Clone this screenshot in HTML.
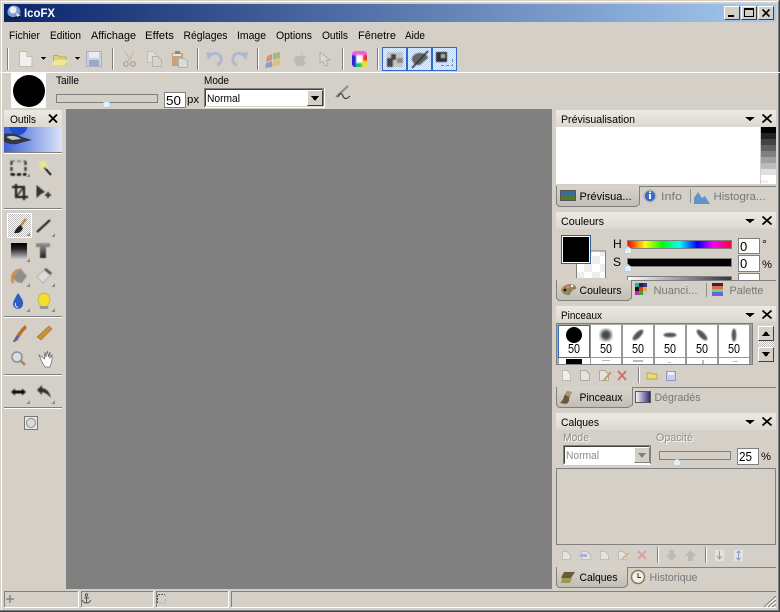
<!DOCTYPE html>
<html><head><meta charset="utf-8"><title>IcoFX</title>
<style>
html,body{margin:0;padding:0;background:#d4d0c8;width:780px;height:612px;overflow:hidden}
svg{display:block}
text{font-family:"Liberation Sans",sans-serif;font-size:11px;fill:#000}
.g{fill:#777}
.d{fill:#8c8c8c}
.ds{fill:#fff}
.e{font-size:13px}
</style></head><body>
<svg xmlns="http://www.w3.org/2000/svg" width="780" height="612" viewBox="0 0 780 612" shape-rendering="crispEdges">
<defs>
<linearGradient id="tb"><stop offset="0" stop-color="#0a246a"/><stop offset="1" stop-color="#a6caf0"/></linearGradient>
<linearGradient id="ph" x2="0" y2="1"><stop offset="0" stop-color="#ece9e3"/><stop offset="1" stop-color="#dcd8d1"/></linearGradient>
<linearGradient id="tab" x2="0" y2="1"><stop offset="0" stop-color="#d8d4cc"/><stop offset="1" stop-color="#c2beb5"/></linearGradient>
<linearGradient id="hue"><stop offset="0" stop-color="#f00"/><stop offset=".17" stop-color="#ff0"/><stop offset=".33" stop-color="#0f0"/><stop offset=".5" stop-color="#0ff"/><stop offset=".67" stop-color="#00f"/><stop offset=".83" stop-color="#f0f"/><stop offset="1" stop-color="#f03"/></linearGradient>
<linearGradient id="ban"><stop offset="0" stop-color="#3d62d8"/><stop offset="1" stop-color="#dbe3f6"/></linearGradient>
<linearGradient id="grad" x2="0" y2="1"><stop offset="0" stop-color="#000"/><stop offset=".35" stop-color="#222"/><stop offset="1" stop-color="#ccc"/></linearGradient>
<linearGradient id="tg" x2="0" y2="1"><stop offset="0" stop-color="#999"/><stop offset="1" stop-color="#222"/></linearGradient>
<linearGradient id="gh"><stop offset="0" stop-color="#fff"/><stop offset="1" stop-color="#334"/></linearGradient>
<linearGradient id="dg"><stop offset="0" stop-color="#fff"/><stop offset="1" stop-color="#2a2470"/></linearGradient>
<pattern id="chk" width="2" height="2" patternUnits="userSpaceOnUse"><rect width="2" height="2" fill="#eef3fb"/><rect width="1" height="1" fill="#bcd0f0"/><rect x="1" y="1" width="1" height="1" fill="#bcd0f0"/></pattern>
<pattern id="chk2" width="2" height="2" patternUnits="userSpaceOnUse"><rect width="2" height="2" fill="#fff"/><rect width="1" height="1" fill="#bbb"/><rect x="1" y="1" width="1" height="1" fill="#bbb"/></pattern>
<pattern id="cb" width="16" height="16" patternUnits="userSpaceOnUse"><rect width="16" height="16" fill="#fff"/><rect width="8" height="8" fill="#ededed"/><rect x="8" y="8" width="8" height="8" fill="#ededed"/></pattern>
<path id="cor" d="M0 4L4 0V4Z" fill="#8a8a8a"/>
<path id="thumb" d="M.5 3.500L4 .5L7.500 3.500V7.500H.5Z" fill="#e4f1f8" stroke="#b5cfe0" stroke-width="1"/>
<filter id="b1"><feGaussianBlur stdDeviation=".8"/></filter>
<filter id="b0"><feGaussianBlur stdDeviation=".5"/></filter>
<filter id="b2"><feGaussianBlur stdDeviation="1.600"/></filter>
<clipPath id="colc"><rect x="352" y="51" width="15" height="16" rx="3"/></clipPath>
</defs>

<!-- window frame -->
<rect width="780" height="612" fill="#d4d0c8"/>
<rect x="1" y="1" width="777" height="1" fill="#fff"/>
<rect x="1" y="1" width="1" height="609" fill="#fff"/>
<rect x="778" y="1" width="1" height="610" fill="#808080"/>
<rect x="779" y="0" width="1" height="612" fill="#404040"/>
<rect x="0" y="610" width="779" height="1" fill="#808080"/>
<rect x="0" y="611" width="780" height="1" fill="#404040"/>

<!-- title bar -->
<rect x="4" y="4" width="772" height="18" fill="url(#tb)"/>
<g shape-rendering="auto">
<circle cx="14" cy="12" r="6.500" fill="#7f9fd4"/><circle cx="13" cy="10" r="3.500" fill="#e9eef8"/><path d="M8 15Q14 20 20 13L21 17Q14 21 8 18Z" fill="#141e3e"/><path d="M16 13L21 15L17 17Z" fill="#dfe6f3"/>
<text x="24" y="17" font-weight="bold" style="font-size:12px;fill:#fff" textLength="31" lengthAdjust="spacingAndGlyphs">IcoFX</text>
</g>
<!-- window buttons -->
<g>
<rect x="724" y="6" width="16" height="14" fill="#d4d0c8"/><path d="M724.500 19.500V6.500H739.500" fill="none" stroke="#fff"/><path d="M724.500 19.500H739.500V6.500" fill="none" stroke="#404040"/><rect x="728" y="15" width="6" height="2" fill="#000"/>
<rect x="741" y="6" width="16" height="14" fill="#d4d0c8"/><path d="M741.500 19.500V6.500H756.500" fill="none" stroke="#fff"/><path d="M741.500 19.500H756.500V6.500" fill="none" stroke="#404040"/><rect x="744.500" y="8.500" width="9" height="8" fill="none" stroke="#000"/><rect x="744" y="8" width="10" height="2" fill="#000"/>
<rect x="758" y="6" width="16" height="14" fill="#d4d0c8"/><path d="M758.500 19.500V6.500H773.500" fill="none" stroke="#fff"/><path d="M758.500 19.500H773.500V6.500" fill="none" stroke="#404040"/>
<path d="M762.500 9.500L769.500 16.500M769.500 9.500L762.500 16.500" stroke="#000" stroke-width="1.600" shape-rendering="auto"/>
</g>

<!-- menu -->
<g shape-rendering="auto">
<text x="9" y="39" textLength="31" lengthAdjust="spacingAndGlyphs">Fichier</text>
<text x="50" y="39" textLength="31" lengthAdjust="spacingAndGlyphs">Edition</text>
<text x="91" y="39" textLength="45" lengthAdjust="spacingAndGlyphs">Affichage</text>
<text x="145" y="39" textLength="29" lengthAdjust="spacingAndGlyphs">Effets</text>
<text x="183.500" y="39" textLength="44" lengthAdjust="spacingAndGlyphs">Réglages</text>
<text x="237" y="39" textLength="29" lengthAdjust="spacingAndGlyphs">Image</text>
<text x="276" y="39" textLength="36" lengthAdjust="spacingAndGlyphs">Options</text>
<text x="322" y="39" textLength="26" lengthAdjust="spacingAndGlyphs">Outils</text>
<text x="358" y="39" textLength="38" lengthAdjust="spacingAndGlyphs">Fênetre</text>
<text x="405" y="39" textLength="20" lengthAdjust="spacingAndGlyphs">Aide</text>
</g>

<!-- toolbar -->
<rect x="0" y="72" width="780" height="1" fill="#fff"/>
<g>
<rect x="7" y="48" width="1" height="22" fill="#808080"/><rect x="8" y="48" width="1" height="22" fill="#fff"/>
<rect x="112" y="48" width="1" height="22" fill="#808080"/><rect x="113" y="48" width="1" height="22" fill="#fff"/>
<rect x="197" y="48" width="1" height="22" fill="#808080"/><rect x="198" y="48" width="1" height="22" fill="#fff"/>
<rect x="257" y="48" width="1" height="22" fill="#808080"/><rect x="258" y="48" width="1" height="22" fill="#fff"/>
<rect x="342" y="48" width="1" height="22" fill="#808080"/><rect x="343" y="48" width="1" height="22" fill="#fff"/>
<rect x="377" y="48" width="1" height="22" fill="#808080"/><rect x="378" y="48" width="1" height="22" fill="#fff"/>
</g>
<path d="M19.500 51.500H27L32 56.500V66.500H19.500Z" fill="#f0f0ee" stroke="#bdbbb6"/><path d="M27 51.500V56.500H32" fill="#d8d6d0" stroke="#bdbbb6"/>
<path d="M41 57H46L43.500 60Z" fill="#000"/>
<path d="M53.500 55.500H58L60 57H66V64.500H53.500Z" fill="#d9d27a" stroke="#b5ad55"/><path d="M54 60H68L65 65H52Z" fill="#efe88e"/>
<path d="M75 57H80L77.500 60Z" fill="#000"/>
<rect x="86.500" y="51.500" width="15" height="15" fill="#c8cfe0" stroke="#a6b0cc"/><rect x="89" y="52" width="10" height="6" fill="#e7ebf4"/><rect x="89" y="60" width="10" height="6" fill="#9fa8c0"/>
<g shape-rendering="auto">
<path d="M125 52L131 61M134 52L128 61" stroke="#c0bdb6" stroke-width="1.500" fill="none"/><circle cx="126" cy="64" r="2.300" fill="none" stroke="#b09f88" stroke-width="1.200"/><circle cx="133" cy="64" r="2.300" fill="none" stroke="#b09f88" stroke-width="1.200"/>
<path d="M207 63Q212 50 219 54Q225 59 217 66" fill="none" stroke="#aab4cd" stroke-width="3" transform="translate(0 0)" style="display:none"/>
<path d="M217 65A6 6 0 1 0 211 55" fill="none" stroke="#aeb8d0" stroke-width="3"/><path d="M206 52L214 53L208 60Z" fill="#aeb8d0"/>
<path d="M237 65A6 6 0 1 1 243 55" fill="none" stroke="#aeb8d0" stroke-width="3"/><path d="M248 52L240 53L246 60Z" fill="#aeb8d0"/>
<path d="M267 56L272 54V60L266 62Z" fill="#d19570"/><path d="M273 53L280 52V58L273 60Z" fill="#a9b87f"/><path d="M266 63L272 61V67L265 68Z" fill="#8ea0c8"/><path d="M273 61L280 59V65L272 67Z" fill="#d8c37e"/>
<path d="M300 56Q304 54 306 57Q302 59 306 63Q303 68 300 66Q297 68 295 63Q292 55 300 56Z" fill="#bdbbb5"/><path d="M300 55Q301 52 303 52Q302 55 300 55Z" fill="#bdbbb5"/>
<path d="M320 52V63L323 61L325 66L328 65L326 60L330 60Z" fill="#dddad3" stroke="#b0aea8"/>
</g>
<!-- copy / paste -->
<path d="M147.500 51.500H153L156 54.500V62.500H147.500Z" fill="#e0ded8" stroke="#c0beb8"/>
<path d="M152.500 56.500H158L161.500 60V66.500H152.500Z" fill="#d6d4ce" stroke="#b5b3ad"/>
<rect x="172" y="53" width="11" height="13" fill="#c9a27a"/><rect x="175" y="51" width="5" height="3" fill="#8a8a84"/><rect x="173" y="54" width="8" height="2" fill="#e8e6e0"/>
<path d="M178.500 58.500H184L187.500 61V67.500H178.500Z" fill="#dcdad4" stroke="#b5b3ad"/>
<!-- colour icon -->
<g clip-path="url(#colc)">
<rect x="352" y="51" width="15" height="16" fill="#fff"/>
<g filter="url(#b1)" shape-rendering="auto">
<rect x="350" y="50" width="19" height="5" fill="#ee60d8"/><rect x="350" y="55" width="6" height="14" fill="#2c28d8"/><rect x="363" y="55" width="6" height="6" fill="#f03030"/><rect x="356" y="63" width="6" height="6" fill="#18c860"/><rect x="362" y="61" width="7" height="8" fill="#e8e020"/>
</g>
</g>
<!-- toggles -->
<g fill="url(#chk)" stroke="#316ac5" stroke-width="1">
<rect x="382.500" y="47.500" width="24" height="23"/><rect x="407.500" y="47.500" width="24" height="23"/><rect x="432.500" y="47.500" width="24" height="23"/>
</g>
<g filter="url(#b0)" shape-rendering="auto">
<rect x="387" y="52" width="16" height="15" fill="#c4c4c4"/><path d="M387 67V58H391V54H396V60H393V67Z" fill="#444"/><rect x="397" y="58" width="6" height="5" fill="#8a8a8a"/>
<path d="M412 60A8 6 0 0 1 428 58L420 65Q414 66 412 60Z" fill="#666"/><path d="M412 68L428 51" stroke="#222" stroke-width="1.500"/>
<rect x="436" y="52" width="11" height="10" fill="#333"/><rect x="441" y="54" width="4" height="4" fill="#aaa"/>
</g>
<path d="M441 65.500H452.500V57" fill="none" stroke="#888" stroke-dasharray="3 2"/>

<!-- options bar -->
<rect x="11" y="73" width="35" height="35" fill="#fff"/>
<circle cx="29" cy="91" r="16" fill="#000" shape-rendering="auto"/>
<g shape-rendering="auto">
<text x="56" y="84" textLength="23" lengthAdjust="spacingAndGlyphs">Taille</text>
<text x="204" y="84" textLength="25" lengthAdjust="spacingAndGlyphs">Mode</text>
<text x="187" y="103" textLength="12" lengthAdjust="spacingAndGlyphs">px</text>
</g>
<rect x="56.500" y="94.500" width="101" height="8" fill="#d4d0c8" stroke="#808080"/>
<use href="#thumb" x="102.500" y="100"/>
<rect x="164.500" y="92.500" width="21" height="15" fill="#fff" stroke="#808080" stroke-width="1"/>
<text x="166" y="105" class="e" textLength="15" lengthAdjust="spacingAndGlyphs" shape-rendering="auto">50</text>
<!-- combo -->
<rect x="204" y="88" width="121" height="20" fill="#fff"/>
<path d="M204.500 107.500V88.500H323.500" fill="none" stroke="#808080"/><path d="M205.500 106.500V89.500H322.500" fill="none" stroke="#404040"/>
<rect x="323" y="88" width="1" height="19" fill="#808080"/><rect x="205" y="106" width="119" height="1" fill="#d4d0c8"/>
<text x="207" y="102" textLength="33" lengthAdjust="spacingAndGlyphs" shape-rendering="auto">Normal</text>
<rect x="307" y="90" width="16" height="16" fill="#d4d0c8"/><path d="M307.500 105.500V90.500H322.500" fill="none" stroke="#fff"/><path d="M307.500 105.500H322.500V90.500" fill="none" stroke="#404040"/>
<path d="M311 96H319L315 101Z" fill="#000"/>
<g shape-rendering="auto" fill="none"><path d="M336 97L348 86" stroke="#8a8a8a" stroke-width="2"/><path d="M338 97Q341 91 343 96T350 96" stroke="#444" stroke-width="1.200"/></g>

<!-- canvas -->
<rect x="66" y="109" width="486" height="480" fill="#808080"/>

<!-- left panel -->
<rect x="4" y="110" width="58" height="17" fill="url(#ph)"/>
<g shape-rendering="auto"><text x="10" y="123" textLength="26" lengthAdjust="spacingAndGlyphs">Outils</text>
<path d="M49 114.500L57 122.500M57 114.500L49 122.500" stroke="#000" stroke-width="1.800"/></g>
<rect x="4" y="127" width="58" height="25" fill="url(#ban)"/>
<g shape-rendering="auto"><path d="M9 127A9 8 0 0 0 27 127Z" fill="#1f4fd0"/><path d="M4 134Q14 132 22 137L32 140L20 143Q14 146 4 142Z" fill="#33373f"/><path d="M6 137Q14 134 21 139L12 140Z" fill="#c5c8d0"/></g>
<g fill="#808080"><rect x="4" y="152" width="58" height="1"/><rect x="4" y="208" width="58" height="1"/><rect x="4" y="316" width="58" height="1"/><rect x="4" y="374" width="58" height="1"/><rect x="4" y="407" width="58" height="1"/></g>
<g fill="#fff"><rect x="4" y="153" width="58" height="1"/><rect x="4" y="209" width="58" height="1"/><rect x="4" y="317" width="58" height="1"/><rect x="4" y="375" width="58" height="1"/><rect x="4" y="408" width="58" height="1"/></g>
<!-- tools row 1 -->
<g filter="url(#b0)" shape-rendering="auto">
<path d="M11 161H26" stroke="#999" stroke-width="2.500" stroke-dasharray="4 2" fill="none"/>
<path d="M11.500 161V175M25.500 161V175" stroke="#444" stroke-width="2.500" stroke-dasharray="4 2" fill="none"/>
<path d="M11 174.500H26" stroke="#111" stroke-width="2.500" stroke-dasharray="4 2" fill="none"/>
</g>
<g shape-rendering="auto"><path d="M44 167L51 175" stroke="#333" stroke-width="2.200"/><g filter="url(#b0)"><path d="M43 160V170M38 165H48M39.500 161.500L46.500 168.500M46.500 161.500L39.500 168.500" stroke="#efe98c" stroke-width="1.400"/></g></g>
<g filter="url(#b0)" shape-rendering="auto">
<path d="M16 184V197H28M12 187H24V200" fill="none" stroke="#222" stroke-width="2.200"/><path d="M16 197L24 187" stroke="#333" stroke-width="1.500"/>
<path d="M36.500 185V198L41 194L45 192Z" fill="#333"/><path d="M45 195H51M48 192V198" stroke="#333" stroke-width="2"/>
</g>
<use href="#cor" x="26" y="173"/><use href="#cor" x="26" y="233"/><use href="#cor" x="51" y="233"/><use href="#cor" x="26" y="258"/><use href="#cor" x="26" y="283"/><use href="#cor" x="51" y="283"/><use href="#cor" x="26" y="308"/><use href="#cor" x="51" y="308"/><use href="#cor" x="26" y="400"/><use href="#cor" x="51" y="400"/>
<!-- brush selected -->
<rect x="7" y="213" width="25" height="25" fill="url(#chk2)"/><rect x="7.500" y="213.500" width="24" height="24" fill="none" stroke="#fff"/>
<use href="#cor" x="26" y="232"/>
<g shape-rendering="auto"><path d="M26 219L19 228" stroke="#b78a3f" stroke-width="2.500"/><path d="M20 225Q16 228 14 233Q21 234 23 228Z" fill="#222"/></g>
<path d="M37 232L50 220" stroke="#222" stroke-width="2.200" shape-rendering="auto" filter="url(#b0)"/>
<rect x="11" y="243" width="16" height="16" fill="url(#grad)"/>
<path d="M36 243H50V247H46V258H40V247H36Z" fill="url(#tg)" filter="url(#b0)" shape-rendering="auto"/>
<g shape-rendering="auto">
<g filter="url(#b0)">
<path d="M13 277L20 268L27 276L22 283Q15 283 13 277Z" fill="#8f8f8f"/><path d="M13 283Q10 274 18 270" fill="none" stroke="#d18a2e" stroke-width="2.500"/>
<path d="M37 277L46 268L52 273L43 283Z" fill="#dcdcdc" stroke="#aaa" stroke-width=".8"/><path d="M44 270L46 268L52 273L50 275Z" fill="#555"/>
</g>
<path d="M18 293Q24 301 23 304A5 5 0 0 1 13 304Q13 301 18 293Z" fill="#2c5fc0"/><path d="M15.500 303A2 3 0 0 0 18 307" stroke="#dfe8fa" fill="none"/>
<path d="M44 293A6.500 6.500 0 0 1 48 304V308H40V304A6.500 6.500 0 0 1 44 293Z" fill="#f2e02a" stroke="#bfae2e" stroke-width=".7"/><rect x="40" y="306" width="8" height="3" fill="#999"/>
<path d="M13 341L18 333L22 328L25 325L27 328L23 332L17 341Z" fill="#b8702a"/><path d="M13 342L17 335L19 337L15 342Z" fill="#4666c8"/>
<path d="M37 337L49 326L52 329L41 340Z" fill="#c8903a" stroke="#a37326" stroke-width=".6"/>
<circle cx="17" cy="357" r="5" fill="#d6deee" stroke="#8f8f8f" stroke-width="1.500"/><path d="M21 361L25 365" stroke="#a98a50" stroke-width="2.500"/>
<path d="M39 355L42 362L45 367H50L52 360V355L50 358L50 352L48.500 357L47.500 351L46 357L45 352L44.500 359Z" fill="#fff" stroke="#666" stroke-width=".7"/>
<g filter="url(#b0)"><path d="M11 392L15 388.500V390.500H22V388.500L26 392L22 395.500V393.500H15V395.500Z" fill="#111"/>
<path d="M37 390L42 385V388Q49 389 51 398Q47 393 42 392V395Z" fill="#333"/></g>
</g>
<rect x="24.500" y="416.500" width="13" height="13" fill="#e8e6e0" stroke="#777"/><circle cx="31" cy="423" r="4.500" fill="#dcdcdc" stroke="#888" shape-rendering="auto"/>

<!-- PREVIEW panel -->
<rect x="556" y="110" width="220" height="17" fill="url(#ph)"/>
<g shape-rendering="auto"><text x="561" y="123" textLength="74" lengthAdjust="spacingAndGlyphs">Prévisualisation</text></g>
<path d="M745 117H755L750 121Z" fill="#000"/>
<path d="M762.500 114.500L771.500 122.500M771.500 114.500L762.500 122.500" stroke="#000" stroke-width="1.800" shape-rendering="auto"/>
<rect x="556" y="127" width="204" height="57" fill="#fff"/>
<g>
<rect x="761" y="127" width="15" height="6" fill="#000"/><rect x="761" y="133" width="15" height="6" fill="#222"/><rect x="761" y="139" width="15" height="6" fill="#444"/><rect x="761" y="145" width="15" height="6" fill="#606060"/><rect x="761" y="151" width="15" height="6" fill="#808080"/><rect x="761" y="157" width="15" height="6" fill="#a0a0a0"/><rect x="761" y="163" width="15" height="6" fill="#bcbcbc"/><rect x="761" y="169" width="15" height="6" fill="#e0e0e0"/><rect x="761" y="175" width="15" height="9" fill="#fff"/><rect x="761" y="180" width="7" height="3" fill="#eee"/>
</g>
<!-- tabs -->
<rect x="640" y="186" width="136" height="1" fill="#808080"/>
<path d="M556.500 186V204L559 206.500H636L639.500 204V186" fill="url(#tab)" stroke="#808080" shape-rendering="auto"/>
<rect x="560" y="190" width="16" height="11" fill="#3d6a9c"/><rect x="560" y="196" width="16" height="5" fill="#4d7a30"/><rect x="560.500" y="190.500" width="15" height="10" fill="none" stroke="#555"/>
<g shape-rendering="auto">
<text x="579.500" y="200" textLength="52" lengthAdjust="spacingAndGlyphs">Prévisua...</text>
<circle cx="650" cy="196" r="6" fill="#3c6cc4" stroke="#bbb" stroke-width="1.500"/><rect x="649" y="194" width="2" height="5" fill="#fff"/><rect x="649" y="191.500" width="2" height="1.500" fill="#fff"/>
<text x="661" y="200" class="g" textLength="21" lengthAdjust="spacingAndGlyphs">Info</text>
<path d="M694 204V198L698 192L702 198L705 196L710 204Z" fill="#6095c8"/>
<text x="713.500" y="200" class="g" textLength="52" lengthAdjust="spacingAndGlyphs">Histogra...</text>
</g>
<rect x="690" y="189" width="1" height="14" fill="#909090"/>

<!-- COULEURS -->
<rect x="556" y="212" width="220" height="17" fill="url(#ph)"/>
<g shape-rendering="auto"><text x="561" y="225" textLength="43" lengthAdjust="spacingAndGlyphs">Couleurs</text></g>
<path d="M745 219H755L750 223Z" fill="#000"/>
<path d="M762.500 216.500L771.500 224.500M771.500 216.500L762.500 224.500" stroke="#000" stroke-width="1.800" shape-rendering="auto"/>
<rect x="577" y="251" width="28" height="27" fill="url(#cb)"/><path d="M576.500 278V251H605.500V278" fill="none" stroke="#808080" stroke-width="1"/>
<rect x="561" y="235" width="30" height="29" fill="#fff"/><rect x="561.500" y="235.500" width="29" height="28" fill="none" stroke="#2f5f9c"/><rect x="563" y="237" width="26" height="25" fill="#000"/>
<g shape-rendering="auto"><text x="613" y="248" style="font-size:12px">H</text><text x="613" y="266" style="font-size:12px">S</text></g>
<rect x="627.500" y="240.500" width="104" height="8" fill="url(#hue)" stroke="#808080"/>
<rect x="627.500" y="258.500" width="104" height="8" fill="#000" stroke="#808080"/>
<rect x="627.500" y="276.500" width="104" height="4" fill="url(#gh)" stroke="#808080"/>
<use href="#thumb" x="624" y="246"/><use href="#thumb" x="624" y="264"/>
<rect x="738.500" y="238.500" width="21" height="15" fill="#fff" stroke="#808080"/>
<rect x="738.500" y="255.500" width="21" height="16" fill="#fff" stroke="#808080"/>
<rect x="738.500" y="273.500" width="21" height="8" fill="#fff" stroke="#808080"/>
<g shape-rendering="auto"><text x="740" y="251" class="e">0</text><text x="740" y="268" class="e">0</text>
<text x="762" y="248" style="font-size:12px">°</text><text x="762" y="268" textLength="10" lengthAdjust="spacingAndGlyphs">%</text></g>
<rect x="556" y="280" width="220" height="25" fill="#d4d0c8"/>
<rect x="632" y="280" width="144" height="1" fill="#808080"/>
<rect x="556" y="280" width="76" height="1" fill="#808080"/>
<path d="M556.500 280V298L559 300.500H628L631.500 298V280" fill="url(#tab)" stroke="#808080" shape-rendering="auto"/>
<g shape-rendering="auto">
<path d="M561 290Q564 284 571 284Q577 285 576 289Q571 290 570 295Q563 296 561 290Z" fill="#9a8350"/><circle cx="565" cy="290" r="1.300" fill="#111"/><circle cx="568" cy="287" r="1.300" fill="#e8a"/><circle cx="572" cy="286" r="1.200" fill="#fff"/><circle cx="566" cy="293" r="1.200" fill="#3ad"/>
<text x="579.500" y="294" textLength="42" lengthAdjust="spacingAndGlyphs">Couleurs</text>
<text x="653.500" y="294" class="g" textLength="44" lengthAdjust="spacingAndGlyphs">Nuanci...</text>
<text x="729.500" y="294" class="g" textLength="34" lengthAdjust="spacingAndGlyphs">Palette</text>
</g>
<g><rect x="635" y="283" width="4" height="4" fill="#3a9"/><rect x="639" y="283" width="4" height="4" fill="#224"/><rect x="643" y="283" width="4" height="4" fill="#338"/><rect x="635" y="287" width="4" height="4" fill="#111"/><rect x="639" y="287" width="4" height="4" fill="#c42"/><rect x="643" y="287" width="4" height="4" fill="#da4"/><rect x="635" y="291" width="4" height="4" fill="#a3a"/><rect x="639" y="291" width="4" height="4" fill="#3a3"/><rect x="643" y="291" width="4" height="4" fill="#bcd"/></g>
<rect x="706" y="283" width="1" height="14" fill="#909090"/>
<rect x="712" y="283" width="11" height="13" fill="#4cc"/><rect x="712" y="283" width="11" height="3" fill="#422"/><rect x="712" y="286" width="11" height="3" fill="#d66"/><rect x="712" y="289" width="11" height="3" fill="#6d6"/><rect x="712" y="292" width="11" height="4" fill="#66d"/>

<!-- PINCEAUX -->
<rect x="556" y="306" width="220" height="16" fill="url(#ph)"/>
<g shape-rendering="auto"><text x="561" y="319" textLength="41" lengthAdjust="spacingAndGlyphs">Pinceaux</text></g>
<path d="M745 313H755L750 317Z" fill="#000"/>
<path d="M762.500 310.500L771.500 318.500M771.500 310.500L762.500 318.500" stroke="#000" stroke-width="1.800" shape-rendering="auto"/>
<rect x="556.500" y="323.500" width="196" height="41" fill="#a8a6a0" stroke="#808080"/>
<rect x="558" y="325" width="193" height="39" fill="#9a9892"/>
<g fill="#fff">
<rect x="559" y="325" width="31" height="32"/><rect x="591" y="325" width="30" height="32"/><rect x="623" y="325" width="30" height="32"/><rect x="655" y="325" width="30" height="32"/><rect x="687" y="325" width="30" height="32"/><rect x="719" y="325" width="30" height="32"/>
<rect x="559" y="358" width="31" height="6"/><rect x="591" y="358" width="30" height="6"/><rect x="623" y="358" width="30" height="6"/><rect x="655" y="358" width="30" height="6"/><rect x="687" y="358" width="30" height="6"/><rect x="719" y="358" width="30" height="6"/>
</g>
<rect x="558.500" y="325.500" width="31" height="32" fill="none" stroke="#316ac5"/>
<rect x="566" y="359" width="16" height="5" fill="#000"/>
<g fill="#bbb"><rect x="602" y="360" width="8" height="1"/><rect x="633" y="360" width="10" height="2"/><rect x="668" y="362" width="3" height="1"/><rect x="702" y="360" width="2" height="4"/><rect x="733" y="361" width="5" height="1"/></g>
<g shape-rendering="auto">
<circle cx="574" cy="335" r="8" fill="#000"/>
<circle cx="606" cy="335" r="5.500" fill="#444" filter="url(#b2)"/>
<g filter="url(#b1)">
<ellipse cx="638" cy="335" rx="7" ry="2.800" transform="rotate(-45 638 335)" fill="#555"/>
<ellipse cx="670" cy="335" rx="6.500" ry="2.300" fill="#555"/>
<ellipse cx="702" cy="335" rx="7" ry="2.800" transform="rotate(45 702 335)" fill="#555"/>
<ellipse cx="734" cy="335" rx="2.300" ry="6.500" fill="#555"/>
</g>
<text x="568" y="353" class="e" textLength="12" lengthAdjust="spacingAndGlyphs">50</text><text x="600" y="353" class="e" textLength="12" lengthAdjust="spacingAndGlyphs">50</text><text x="632" y="353" class="e" textLength="12" lengthAdjust="spacingAndGlyphs">50</text><text x="664" y="353" class="e" textLength="12" lengthAdjust="spacingAndGlyphs">50</text><text x="696" y="353" class="e" textLength="12" lengthAdjust="spacingAndGlyphs">50</text><text x="728" y="353" class="e" textLength="12" lengthAdjust="spacingAndGlyphs">50</text>
</g>
<!-- scrollbar -->
<rect x="758" y="341" width="16" height="6" fill="url(#chk2)"/>
<rect x="758" y="326" width="16" height="15" fill="#d4d0c8"/><path d="M758.500 340.500V326.500H773.500" fill="none" stroke="#fff"/><path d="M758.500 340.500H773.500V326.500" fill="none" stroke="#404040"/><path d="M762 336H770L766 331Z" fill="#000"/>
<rect x="758" y="347" width="16" height="15" fill="#d4d0c8"/><path d="M758.500 361.500V347.500H773.500" fill="none" stroke="#fff"/><path d="M758.500 361.500H773.500V347.500" fill="none" stroke="#404040"/><path d="M762 352H770L766 357Z" fill="#000"/>
<!-- pinceaux icons -->
<path d="M562.500 370.500H567L570.500 374V380.500H562.500Z" fill="#eeeeea" stroke="#bbb"/>
<path d="M580.500 370.500H586L589.500 374V380.500H580.500Z" fill="#e5e3dd" stroke="#aaa"/>
<path d="M599.500 370.500H605L608.500 374V380.500H599.500Z" fill="#e5e3dd" stroke="#aaa"/><path d="M604 380L611 372" stroke="#c89a5a" stroke-width="2" shape-rendering="auto"/>
<path d="M618 371L626 380M626 371L618 380" stroke="#d07070" stroke-width="2" shape-rendering="auto"/>
<rect x="638" y="367" width="1" height="16" fill="#808080"/><rect x="639" y="367" width="1" height="16" fill="#fff"/>
<path d="M647 373H651L652 374H657V379H647Z" fill="#e6dc78" stroke="#b5ad55" stroke-width=".8"/>
<rect x="666.500" y="371.500" width="9" height="9" fill="#c9d0e6" stroke="#8d9cc6"/><rect x="668" y="372" width="6" height="3" fill="#eef"/>
<rect x="556" y="387" width="220" height="1" fill="#808080"/>
<path d="M556.500 387V405L559 407.500H628L632.500 405V387" fill="url(#tab)" stroke="#808080" shape-rendering="auto"/>
<g shape-rendering="auto">
<path d="M567 391L572 392L569 398Q570 402 566 404L560 403Q564 399 564 396Z" fill="#6b5a3a"/><path d="M567 391L572 392L570 397L565 395Z" fill="#a89a70"/>
<text x="579.500" y="401" textLength="43" lengthAdjust="spacingAndGlyphs">Pinceaux</text>
<text x="654.500" y="401" class="g" textLength="46" lengthAdjust="spacingAndGlyphs">Dégradés</text>
</g>
<rect x="635.500" y="391.500" width="15" height="11" fill="url(#dg)" stroke="#555"/>

<!-- CALQUES -->
<rect x="556" y="413" width="220" height="17" fill="url(#ph)"/>
<g shape-rendering="auto"><text x="561" y="426" textLength="38" lengthAdjust="spacingAndGlyphs">Calques</text></g>
<path d="M745 420H755L750 424Z" fill="#000"/>
<path d="M762.500 417.500L771.500 425.500M771.500 417.500L762.500 425.500" stroke="#000" stroke-width="1.800" shape-rendering="auto"/>
<g shape-rendering="auto">
<text x="564" y="442" class="ds" textLength="26" lengthAdjust="spacingAndGlyphs">Mode</text><text x="563" y="441" class="d" textLength="26" lengthAdjust="spacingAndGlyphs">Mode</text>
<text x="657" y="442" class="ds" textLength="37" lengthAdjust="spacingAndGlyphs">Opacité</text><text x="656" y="441" class="d" textLength="37" lengthAdjust="spacingAndGlyphs">Opacité</text>
</g>
<rect x="563" y="445" width="88" height="20" fill="#fff"/>
<path d="M563.500 464.500V445.500H650.500" fill="none" stroke="#808080"/><path d="M564.500 463.500V446.500H649.500" fill="none" stroke="#404040"/>
<rect x="650" y="445" width="1" height="19" fill="#808080"/>
<text x="566" y="459" style="fill:#8a8a8a" textLength="33" lengthAdjust="spacingAndGlyphs" shape-rendering="auto">Normal</text>
<rect x="634" y="447" width="16" height="16" fill="#d4d0c8"/><path d="M634.500 462.500V447.500H649.500" fill="none" stroke="#fff"/><path d="M634.500 462.500H649.500V447.500" fill="none" stroke="#808080"/><path d="M638 453H646L642 458Z" fill="#808080"/>
<rect x="659.500" y="451.500" width="71" height="8" fill="#d4d0c8" stroke="#808080"/>
<use href="#thumb" x="673" y="458"/>
<rect x="737.500" y="448.500" width="21" height="16" fill="#fff" stroke="#808080"/>
<g shape-rendering="auto"><text x="739" y="461" class="e" textLength="13" lengthAdjust="spacingAndGlyphs">25</text><text x="761" y="460" textLength="10" lengthAdjust="spacingAndGlyphs">%</text></g>
<rect x="556.500" y="468.500" width="219" height="76" fill="#d4d0c8" stroke="#808080"/>
<!-- layer icons -->
<g>
<path d="M562.500 551.500H567L570.500 555V559.500H562.500Z" fill="#e5e3dd" stroke="#c0beb8"/>
<path d="M581.500 551.500H587L590.500 555V559.500H581.500Z" fill="#e5e3dd" stroke="#c0beb8"/><rect x="580" y="554" width="7" height="3" fill="#a9b0d6"/>
<path d="M600.500 551.500H605L608.500 555V559.500H600.500Z" fill="#e5e3dd" stroke="#c0beb8"/>
<path d="M618.500 551.500H623L626.500 555V559.500H618.500Z" fill="#e5e3dd" stroke="#c0beb8"/><path d="M622 559L629 553" stroke="#d8b88a" stroke-width="2" shape-rendering="auto"/>
<path d="M638 551L646 559M646 551L638 559" stroke="#dba0a0" stroke-width="2" shape-rendering="auto"/>
<rect x="657" y="547" width="1" height="16" fill="#808080"/><rect x="658" y="547" width="1" height="16" fill="#fff"/>
<path d="M669 550H674V555H677L671.500 561L666 555H669Z" fill="#bdbab3"/>
<path d="M688 561H693V556H696L690.500 550L685 556H688Z" fill="#bdbab3"/>
<rect x="705" y="547" width="1" height="16" fill="#808080"/><rect x="706" y="547" width="1" height="16" fill="#fff"/>
<rect x="715" y="550" width="9" height="11" fill="#e4e2dc"/><path d="M719.500 551V559M717 556L719.500 559L722 556" stroke="#8d9cc6" fill="none"/>
<rect x="734" y="550" width="9" height="11" fill="#e4e2dc"/><path d="M738.500 551V560M736.500 553L738.500 551L740.500 553M736.500 558L738.500 560L740.500 558" stroke="#8d9cc6" fill="none"/>
</g>
<rect x="628" y="567" width="148" height="1" fill="#808080"/>
<path d="M556.500 567V585L559 587.500H624L627.500 585V567" fill="url(#tab)" stroke="#808080" shape-rendering="auto"/>
<g shape-rendering="auto">
<path d="M564 572H575L571 578H561Z" fill="#6a5a3a"/><path d="M562 578H572L570 583H561Z" fill="#9a9a50"/>
<text x="579.500" y="581" textLength="38" lengthAdjust="spacingAndGlyphs">Calques</text>
<circle cx="638" cy="577" r="6.500" fill="#f2efe6" stroke="#8a7a50" stroke-width="1.500"/><path d="M638 573V577.500H641" stroke="#333" fill="none"/>
<text x="649.500" y="581" class="g" textLength="48" lengthAdjust="spacingAndGlyphs">Historique</text>
</g>

<!-- status bar -->
<g>
<path d="M4.500 607V591.500H78" fill="none" stroke="#808080"/><path d="M4 607.500H78.500V591" fill="none" stroke="#fff"/>
<path d="M81.500 607V591.500H153" fill="none" stroke="#808080"/><path d="M81 607.500H153.500V591" fill="none" stroke="#fff"/>
<path d="M156.500 607V591.500H228" fill="none" stroke="#808080"/><path d="M156 607.500H228.500V591" fill="none" stroke="#fff"/>
<path d="M231.500 607V591.500H776" fill="none" stroke="#808080"/><path d="M231 607.500H776" fill="none" stroke="#fff"/>
</g>
<path d="M6 599H14M10 595V603" stroke="#666" fill="none"/>
<g shape-rendering="auto" fill="none" stroke="#555"><circle cx="86.500" cy="595" r="1.200"/><path d="M86.500 596V603M84 598H89M82.500 600Q83 603 86.500 603Q90 603 90.500 600"/></g>
<path d="M157.500 603V594.500H165" fill="none" stroke="#555" stroke-dasharray="2 1"/><path d="M165.500 595V603H158" fill="none" stroke="#aaa" stroke-dasharray="2 2"/>
<!-- grip -->
<g shape-rendering="auto" stroke-width="1"><path d="M764 607L776 596M768 607L776 600M772 607L776 604" stroke="#808080"/><path d="M766 607L776 598M770 607L776 602" stroke="#fff"/></g>
</svg>
</body></html>
